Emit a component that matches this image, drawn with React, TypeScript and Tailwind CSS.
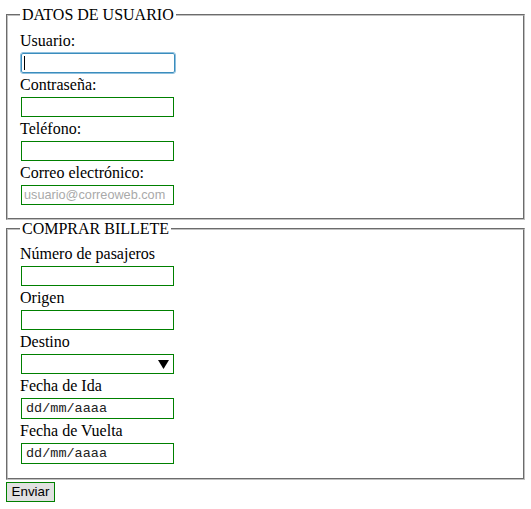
import React from "react";

const serif = { fontFamily: '"Liberation Serif", "Times New Roman", serif' };
const sans = { fontFamily: '"Liberation Sans", Arial, sans-serif' };
const mono = { fontFamily: '"Liberation Mono", "Courier New", monospace' };

function Label({ children }: { children: React.ReactNode }) {
  return <div className="h-[19px] text-[16px] leading-[19px] text-black whitespace-nowrap">{children}</div>;
}

function Box({ children, focused, tall }: { children?: React.ReactNode; focused?: boolean; tall?: boolean }) {
  return (
    <div className="mt-[3px] mb-[2px] ml-[1px] flex">
      <div
        className={
          focused
            ? "relative h-[20px] w-[154px] rounded-[2px] border border-[#3b8dbd] bg-white outline outline-1 outline-[#8fc0de]"
            : tall
              ? "relative h-[21px] w-[153px] border border-[#008000] bg-white"
              : "relative h-[20px] w-[153px] border border-[#008000] bg-white"
        }
      >
        {children}
      </div>
    </div>
  );
}

function DateText() {
  return (
    <span className="absolute left-[4px] top-[1px] text-[13.5px] leading-[18px] text-[#222]" style={mono}>
      dd/mm/aaaa
    </span>
  );
}

export default function App() {
  return (
    <div className="min-h-[509px] w-[531px] bg-white pt-[6px]" style={serif}>
      <fieldset className="mx-[6px] border-2 border-[#c0c0c0] px-[12px] pt-[7px] pb-[11px] [border-style:groove]">
        <legend className="px-[2px] text-[16px] leading-[18px] text-black">DATOS DE USUARIO</legend>
        <Label>Usuario:</Label>
        <Box focused>
          <span className="absolute left-[2px] top-[2px] h-[14px] w-[1px] bg-black" />
        </Box>
        <Label>Contraseña:</Label>
        <Box />
        <Label>Teléfono:</Label>
        <Box />
        <Label>Correo electrónico:</Label>
        <Box>
          <span className="absolute left-[2px] top-0 text-[12.7px] leading-[18px] text-[#a9a9a9]" style={sans}>
            usuario@correoweb.com
          </span>
        </Box>
      </fieldset>
      <fieldset className="mx-[6px] border-2 border-[#c0c0c0] px-[12px] pt-[6px] pb-[12px] [border-style:groove]">
        <legend className="px-[2px] text-[16px] leading-[18px] text-black">COMPRAR BILLETE</legend>
        <Label>Número de pasajeros</Label>
        <Box />
        <Label>Origen</Label>
        <Box />
        <Label>Destino</Label>
        <Box>
          <svg className="absolute right-[4px] top-[5px]" width="11" height="9" viewBox="0 0 11 9">
            <path d="M0 0 H11 L5.5 9 Z" fill="#000" />
          </svg>
        </Box>
        <Label>Fecha de Ida</Label>
        <Box tall>
          <DateText />
        </Box>
        <Label>Fecha de Vuelta</Label>
        <Box tall>
          <DateText />
        </Box>
      </fieldset>
      <div className="ml-[6px] mt-[2px] flex">
        <button
          className="h-[20px] w-[49px] border border-[#008000] bg-[#e1e1e1] text-[13.33px] leading-[18px] text-black"
          style={sans}
        >
          Enviar
        </button>
      </div>
    </div>
  );
}
